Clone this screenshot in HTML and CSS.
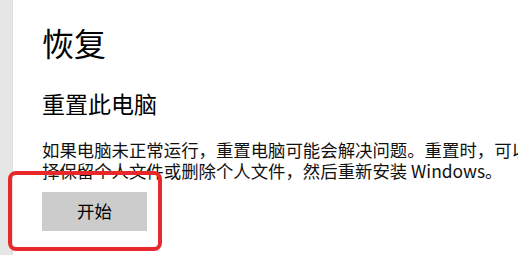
FILE: index.html
```html
<!DOCTYPE html>
<html lang="zh-CN">
<head>
<meta charset="utf-8">
<title>恢复</title>
<link rel="stylesheet" href="styles.css">
</head>
<body>
<div class="page">
  <aside class="sidebar"></aside>
  <main class="content">
    <h1 class="title">恢复</h1>
    <h2 class="subtitle">重置此电脑</h2>
    <p class="desc">
      <span class="line">如果电脑未正常运行，重置电脑可能会解决问题。重置时，可以选</span>
      <span class="line">择保留个人文件或删除个人文件，然后重新安装 Windows。</span>
    </p>
    <button class="btn" type="button">开始</button>
  </main>
  <div class="highlight"></div>
</div>
</body>
</html>
```

FILE: styles.css
```css
html, body {
  margin: 0;
  padding: 0;
  background: #ffffff;
  overflow: hidden;
}

.page {
  position: relative;
  display: flex;
  width: 518px;
  height: 255px;
  overflow: hidden;
  font-family: "Noto Sans CJK SC", "Noto Sans", sans-serif;
  color: #000000;
}

.sidebar {
  flex: 0 0 12px;
  background: #e6e6e6;
  border-right: 1px solid #dedede;
}

.content {
  flex: 1 1 auto;
  padding: 22px 0 0 29px;
  min-width: 0;
}

.title {
  margin: 0;
  font-size: 32px;
  line-height: 40px;
  font-weight: 400;
}

.subtitle {
  margin: 27px 0 0 0;
  font-size: 23px;
  line-height: 28px;
  font-weight: 400;
}

.desc {
  margin: 22px 0 0 0;
  font-size: 17.4px;
  line-height: 21px;
  color: #111111;
}

.line {
  display: block;
  white-space: nowrap;
}

.btn {
  display: flex;
  align-items: center;
  justify-content: center;
  margin: 11px 0 0 0;
  width: 105px;
  height: 39px;
  padding: 0 0 2px 0;
  border: none;
  background: #cccccc;
  font-family: "Noto Sans CJK SC", "Noto Sans", sans-serif;
  font-size: 17.4px;
  color: #000000;
}

.highlight {
  position: absolute;
  left: 8px;
  top: 171px;
  width: 146px;
  height: 72px;
  border: 4px solid #e8282b;
  border-radius: 8px;
}
```
